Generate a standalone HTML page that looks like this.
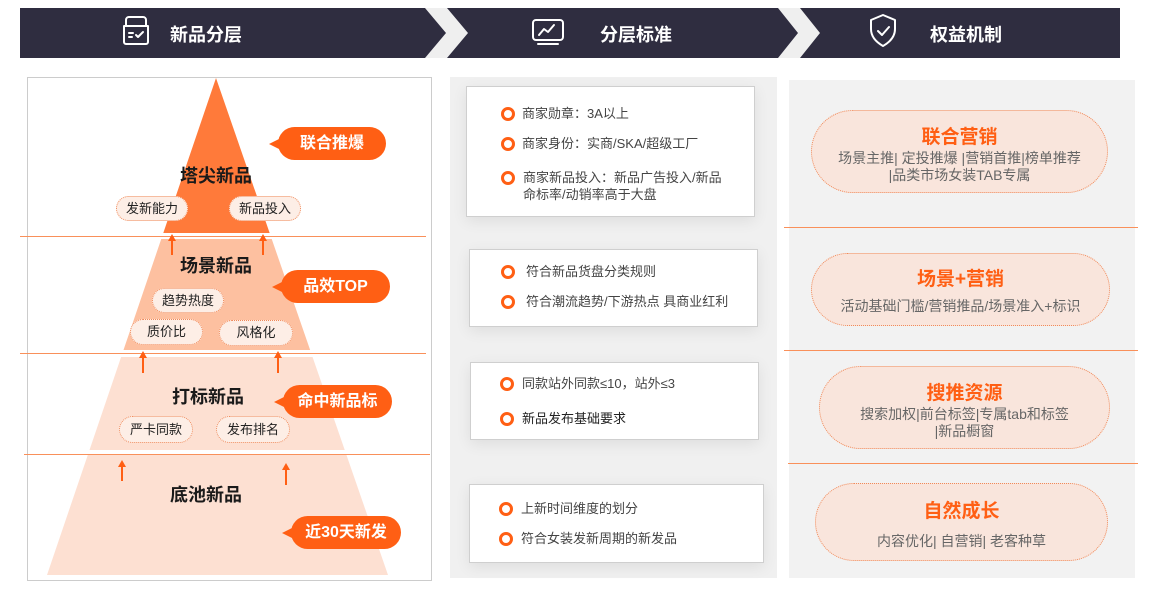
<!DOCTYPE html>
<html><head><meta charset="utf-8">
<style>
*{margin:0;padding:0;box-sizing:border-box}
body{width:1157px;height:589px;background:#fff;position:relative;overflow:hidden;font-family:"Liberation Sans","Noto Sans CJK SC",sans-serif}
.a{position:absolute;white-space:nowrap}
.ht{color:#fff;font-weight:bold;font-size:18px;top:21px}
.tt{font-weight:bold;font-size:18px;color:#1a1a1a;transform:translateX(-50%)}
.pill{position:absolute;border:1px dotted #f08a5a;border-radius:14px;background:#fdeee6;font-size:13px;color:#222;text-align:center}
.bub{position:absolute;background:#ff5f14;color:#fff;font-weight:bold;font-size:16px;border-radius:17px;text-align:center;height:33px;line-height:33px}
.bub:before{content:"";position:absolute;left:-9px;top:11px;border-right:12px solid #ff5f14;border-top:6px solid transparent;border-bottom:6px solid transparent}
.card{position:absolute;background:#fff;border:1px solid #cfcfcf;box-shadow:0 4px 14px rgba(0,0,0,.08)}
.it{position:absolute;font-size:13px;color:#444;line-height:17px}
.dot{position:absolute;width:14px;height:14px;border:3px solid #ff5f14;border-radius:50%}
.rp{position:absolute;background:#f9e5dc;border:1px dotted #f08a5a;border-radius:42px;text-align:center}
.rt{color:#ff5f14;font-weight:bold;font-size:19px;line-height:24px}
.rs{color:#666;font-size:14px;line-height:17px}
</style></head><body>
<svg class="a" style="left:0;top:0" width="1157" height="589">
<rect x="20" y="8" width="1100" height="50" fill="#2f2d40"/>
<polygon points="425,8 447,8 468,33 447,58 425,58 446,33" fill="#efefef"/>
<polygon points="778,8 800,8 820,33 800,58 778,58 798,33" fill="#efefef"/>
<g fill="none" stroke="#fff" stroke-width="2" stroke-linecap="round" stroke-linejoin="round">
<path d="M126,26 V20 a3,3 0 0 1 3,-3 h14 a3,3 0 0 1 3,3 V26 M124,26 h24 v16 a2,2 0 0 1 -2,2 h-20 a2,2 0 0 1 -2,-2 z"/>
<path d="M129,33 h4 M129,37 h3 M136,35 l2,2 l5,-5"/>
<rect x="533" y="20" width="30" height="20" rx="3"/>
<path d="M539,35 l5,-6 l4,3 l6,-7 M538,44 h20"/>
<path d="M883,15 l12,5 v9 c0,8 -5,13 -12,17 c-7,-4 -12,-9 -12,-17 v-9 z"/>
<path d="M878,31 l4,4 l7,-8"/>
</g>
<rect x="27.5" y="77.5" width="404" height="503" fill="#fff" stroke="#ccc"/>
<defs><clipPath id="py"><polygon points="216,78 47,575 388,575"/></clipPath></defs>
<g clip-path="url(#py)">
<rect x="0" y="78" width="440" height="155" fill="#ff7a3a"/>
<rect x="0" y="239" width="440" height="111" fill="#fdc0a0"/>
<rect x="0" y="357" width="440" height="93" fill="#fde0d2"/>
<rect x="0" y="455" width="440" height="120" fill="#fde0d2"/>
</g>
<g stroke="#f9905a" stroke-width="1">
<line x1="20" y1="236.5" x2="426" y2="236.5"/>
<line x1="20" y1="353.5" x2="426" y2="353.5"/>
<line x1="24" y1="454.5" x2="430" y2="454.5"/>
</g>
<g stroke="#ff5f14" stroke-width="2" fill="#ff5f14">
<line x1="172" y1="240" x2="172" y2="255"/><polygon points="168,241 176,241 172,234" stroke="none"/>
<line x1="263" y1="240" x2="263" y2="255"/><polygon points="259,241 267,241 263,234" stroke="none"/>
<line x1="143" y1="357" x2="143" y2="373"/><polygon points="139,358 147,358 143,351" stroke="none"/>
<line x1="278" y1="357" x2="278" y2="373"/><polygon points="274,358 282,358 278,351" stroke="none"/>
<line x1="122" y1="466" x2="122" y2="481"/><polygon points="118,467 126,467 122,460" stroke="none"/>
<line x1="286" y1="469" x2="286" y2="485"/><polygon points="282,470 290,470 286,463" stroke="none"/>
</g>
<rect x="450" y="77" width="327" height="501" fill="#f0f0f0"/>
<rect x="789" y="80" width="346" height="498" fill="#f2f2f2"/>
<g stroke="#f9905a" stroke-width="1">
<line x1="784" y1="227.5" x2="1138" y2="227.5"/>
<line x1="784" y1="350.5" x2="1138" y2="350.5"/>
<line x1="788" y1="463.5" x2="1138" y2="463.5"/>
</g>
</svg>
<div class="a ht" style="left:170px">新品分层</div>
<div class="a ht" style="left:600px">分层标准</div>
<div class="a ht" style="left:930px">权益机制</div>

<div class="a tt" style="left:216px;top:162px">塔尖新品</div>
<div class="a tt" style="left:216px;top:252px">场景新品</div>
<div class="a tt" style="left:208px;top:383px">打标新品</div>
<div class="a tt" style="left:206px;top:481px">底池新品</div>

<div class="pill" style="left:116px;top:196px;width:72px;height:25px;line-height:23px">发新能力</div>
<div class="pill" style="left:229px;top:196px;width:72px;height:25px;line-height:23px">新品投入</div>
<div class="pill" style="left:152px;top:288px;width:72px;height:25px;line-height:23px">趋势热度</div>
<div class="pill" style="left:130px;top:319px;width:73px;height:26px;line-height:24px">质价比</div>
<div class="pill" style="left:219px;top:320px;width:74px;height:26px;line-height:24px">风格化</div>
<div class="pill" style="left:119px;top:416px;width:74px;height:27px;line-height:25px">严卡同款</div>
<div class="pill" style="left:216px;top:416px;width:74px;height:27px;line-height:25px">发布排名</div>

<div class="bub" style="left:278px;top:127px;width:108px">联合推爆</div>
<div class="bub" style="left:281px;top:270px;width:109px">品效TOP</div>
<div class="bub" style="left:283px;top:385px;width:109px">命中新品标</div>
<div class="bub" style="left:291px;top:516px;width:110px">近30天新发</div>

<div class="card" style="left:466px;top:86px;width:289px;height:131px">
<div class="dot" style="left:34px;top:20px"></div><div class="it" style="left:55px;top:18px">商家勋章：3A以上</div>
<div class="dot" style="left:34px;top:50px"></div><div class="it" style="left:55px;top:48px">商家身份：实商/SKA/超级工厂</div>
<div class="dot" style="left:34px;top:84px"></div><div class="it" style="left:56px;top:82px">商家新品投入：新品广告投入/新品<br>命标率/动销率高于大盘</div>
</div>
<div class="card" style="left:469px;top:249px;width:289px;height:78px">
<div class="dot" style="left:31px;top:15px"></div><div class="it" style="left:56px;top:13px">符合新品货盘分类规则</div>
<div class="dot" style="left:31px;top:45px"></div><div class="it" style="left:56px;top:43px">符合潮流趋势/下游热点 具商业红利</div>
</div>
<div class="card" style="left:470px;top:362px;width:289px;height:78px">
<div class="dot" style="left:29px;top:14px"></div><div class="it" style="left:51px;top:12px">同款站外同款≤10，站外≤3</div>
<div class="dot" style="left:29px;top:49px"></div><div class="it" style="left:51px;top:47px;color:#222">新品发布基础要求</div>
</div>
<div class="card" style="left:469px;top:484px;width:295px;height:79px">
<div class="dot" style="left:29px;top:17px"></div><div class="it" style="left:51px;top:15px">上新时间维度的划分</div>
<div class="dot" style="left:29px;top:47px"></div><div class="it" style="left:51px;top:45px">符合女装发新周期的新发品</div>
</div>

<div class="rp" style="left:811px;top:110px;width:297px;height:83px;padding-top:15px"><div class="rt">联合营销</div><div class="rs">场景主推| 定投推爆 |营销首推|榜单推荐<br>|品类市场女装TAB专属</div></div>
<div class="rp" style="left:811px;top:253px;width:299px;height:73px;padding-top:14px"><div class="rt">场景+营销</div><div class="rs" style="margin-top:6px">活动基础门槛/营销推品/场景准入+标识</div></div>
<div class="rp" style="left:819px;top:366px;width:291px;height:83px;padding-top:15px"><div class="rt">搜推资源</div><div class="rs">搜索加权|前台标签|专属tab和标签<br>|新品橱窗</div></div>
<div class="rp" style="left:815px;top:483px;width:293px;height:78px;padding-top:16px"><div class="rt">自然成长</div><div class="rs" style="margin-top:9px">内容优化| 自营销| 老客种草</div></div>
</body></html>
